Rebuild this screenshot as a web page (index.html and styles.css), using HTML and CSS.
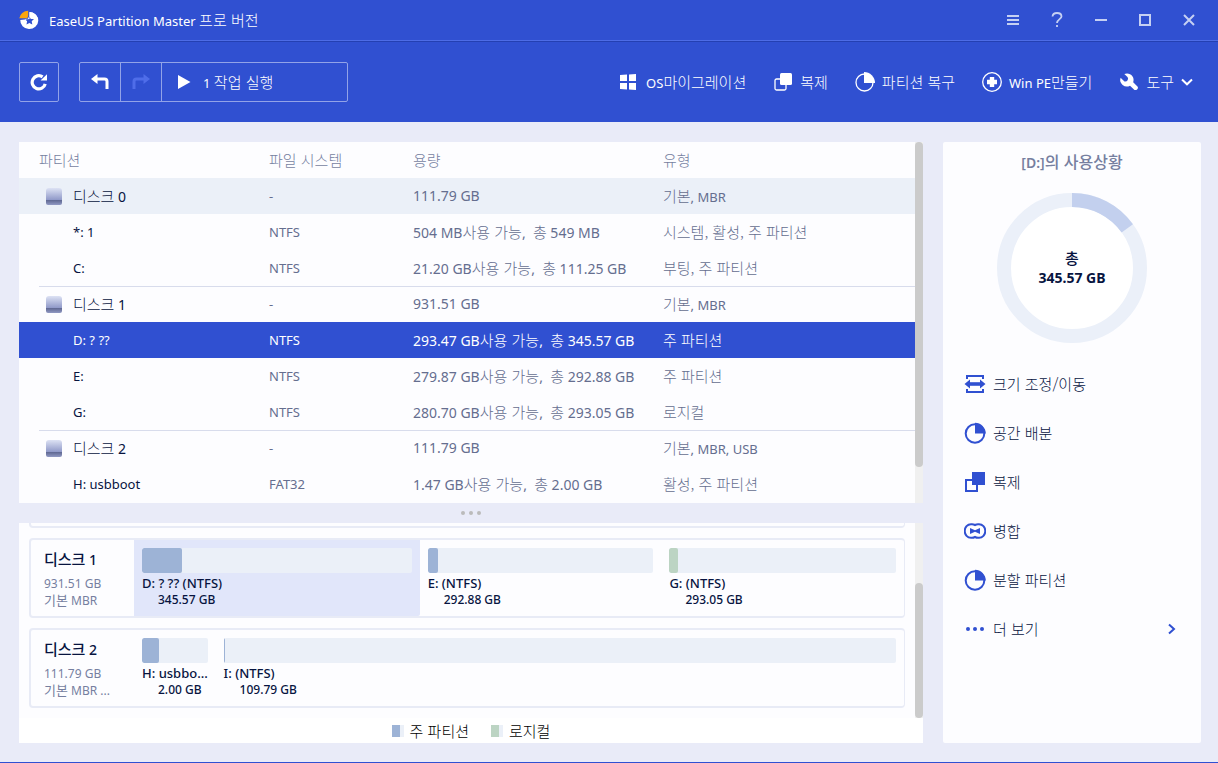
FILE: index.html
```html
<!DOCTYPE html>
<html lang="ko">
<head>
<meta charset="utf-8">
<meta name="viewport" content="width=device-width, initial-scale=1">
<title>EaseUS Partition Master</title>
<link rel="stylesheet" href="styles.css">
</head>
<body>
<div class="app">
  <header class="titlebar">
    <svg class="logo" width="20" height="20" viewBox="0 0 20 20" aria-hidden="true">
      <path fill="#fff" fill-rule="evenodd" d="M10.500 2A9 8.500 0 1 1 1.300 10L10.500 9ZM10.400 5.800L11.800 8.700 15.000 9.100 12.700 11.300 13.300 14.500 10.400 13 7.500 14.500 8.100 11.300 5.800 9.100 9 8.700Z"/>
      <path fill="#fff" d="M10.500 2A9 8.500 0 0 1 19 9L15 9.100 11.800 8.700 10.500 6Z"/>
      <path fill="#fba60c" d="M.3 8.300A9 8.500 0 0 1 9.200.8V6L8.200 8.300Z"/>
    </svg>
    <h1 class="app-name">EaseUS Partition Master <span class="ko">프로 버전</span></h1>
    <div class="window-controls">
      <button type="button" aria-label="Menu"><svg width="12" height="12" viewBox="0 0 12 12"><path d="M0 2H12M0 6H12M0 10H12" stroke="currentColor" stroke-width="2"/></svg></button>
      <button type="button" aria-label="Help"><svg width="12" height="16" viewBox="0 0 12 16"><path d="M1.500 4.500C1.700 2.300 3.500 1 6 1S10.500 2.400 10.500 4.500C10.500 7 6 7.400 6 11M6 13V15" fill="none" stroke="currentColor" stroke-width="1.800"/></svg></button>
      <button type="button" aria-label="Minimize"><svg width="12" height="12" viewBox="0 0 12 12"><path d="M0 6H12" stroke="currentColor" stroke-width="2"/></svg></button>
      <button type="button" aria-label="Maximize"><svg width="12" height="12" viewBox="0 0 12 12"><path d="M1 1H11V11H1Z" fill="none" stroke="currentColor" stroke-width="2"/></svg></button>
      <button type="button" aria-label="Close"><svg width="12" height="12" viewBox="0 0 12 12"><path d="M1 1L11 11M11 1L1 11" stroke="currentColor" stroke-width="2"/></svg></button>
    </div>
  </header>

  <nav class="toolbar">
    <button type="button" class="tool-button" aria-label="Refresh"><svg width="18" height="18" viewBox="0 0 18 18"><path d="M15.200 10.800A6.600 6.600 0 1 1 12.600 3.900" fill="none" stroke="#fff" stroke-width="3.200"/><path d="M11 6.900L17 1.200V7.600H10.600Z" fill="#fff"/></svg></button>
    <div class="button-group">
      <button type="button" class="undo" aria-label="Undo"><svg width="18" height="16" viewBox="0 0 18 16"><path d="M5 5H13.500Q16 5 16 7.500V15" fill="none" stroke="#fff" stroke-width="3"/><path d="M0 5L6.500 0V10Z" fill="#fff"/></svg></button>
      <button type="button" class="redo" aria-label="Redo" disabled><svg width="18" height="16" viewBox="0 0 18 16"><path d="M13 5H4.500Q2 5 2 7.500V15" fill="none" stroke="#4f6de9" stroke-width="3"/><path d="M18 5L11.500 0V10Z" fill="#4f6de9"/></svg></button>
      <button type="button" class="run"><svg width="14" height="16" viewBox="0 0 14 16"><path d="M1 1L13.500 8L1 15Z" fill="#fff"/></svg><span>1 <span class="ko">작업 실행</span></span></button>
    </div>
    <div class="menu">
      <button type="button"><svg width="20" height="20" viewBox="0 0 20 20"><path d="M1 3L8 2.600V9H1ZM10 2.500L17 2V9H10ZM1 11H8V17.400L1 17ZM10 11H17V18L10 17.500Z" fill="#fff"/></svg><span>OS<span class="ko">마이그레이션</span></span></button>
      <button type="button"><svg width="20" height="20" viewBox="0 0 20 20"><rect x="2" y="7" width="11" height="11" rx="1.500" fill="none" stroke="#fff" stroke-width="1.300"/><rect x="7" y="1" width="12" height="12" rx="1.500" fill="#fff"/></svg><span class="ko">복제</span></button>
      <button type="button"><svg width="20" height="20" viewBox="0 0 20 20"><circle cx="9.500" cy="10.500" r="8.500" fill="none" stroke="#fff" stroke-width="1.300"/><path d="M9 0A11 11 0 0 1 20 11H9Z" fill="#fff"/></svg><span class="ko">파티션 복구</span></button>
      <button type="button"><svg width="20" height="20" viewBox="0 0 20 20"><circle cx="10" cy="10" r="9.300" fill="none" stroke="#fff" stroke-width="1.300"/><path d="M10 5V15M5 10H15" stroke="#fff" stroke-width="4.400"/></svg><span>Win PE<span class="ko">만들기</span></span></button>
      <button type="button"><svg width="20" height="20" viewBox="0 0 20 20"><path fill="#fff" d="M8 1.500A6.500 6.500 0 0 1 14.200 10.200L18.700 14.700Q19.500 16 18.300 17.200T15.500 18L11 13.700A6.600 6.600 0 0 1 1.600 5.800L5.500 9.500Q7.500 10 8.600 8.200T8.500 5L5.300 2Q6.500 1.500 8 1.500Z"/></svg><span class="ko">도구</span><svg class="chevron" width="12" height="8" viewBox="0 0 12 8"><path d="M1 1.500L6 6.300L11 1.500" fill="none" stroke="#fff" stroke-width="2"/></svg></button>
    </div>
  </nav>

  <main class="workspace">
    <div class="left">
      <section class="panel list-panel">
        <table class="partitions">
          <colgroup><col class="c-name"><col class="c-fs"><col class="c-size"><col class="c-type"></colgroup>
          <thead>
            <tr><th class="ko">파티션</th><th class="ko">파일 시스템</th><th class="ko">용량</th><th class="ko">유형</th></tr>
          </thead>
          <tbody>
            <tr class="disk hover"><td><div class="disk-name"><i class="drive"></i><span><span class="ko">디스크</span> 0</span></div></td><td>-</td><td>111.79 GB</td><td><span class="ko">기본</span>, MBR</td></tr>
            <tr><td>*: 1</td><td>NTFS</td><td>504 MB<span class="ko">사용 가능</span>,&nbsp; <span class="ko">총</span> 549 MB</td><td><span class="ko">시스템, 활성, 주 파티션</span></td></tr>
            <tr><td>C:</td><td>NTFS</td><td>21.20 GB<span class="ko">사용 가능</span>,&nbsp; <span class="ko">총</span> 111.25 GB</td><td><span class="ko">부팅, 주 파티션</span></td></tr>
            <tr class="disk ruled"><td><div class="disk-name"><i class="drive"></i><span><span class="ko">디스크</span> 1</span></div></td><td>-</td><td>931.51 GB</td><td><span class="ko">기본</span>, MBR</td></tr>
            <tr class="selected"><td>D: ? ??</td><td>NTFS</td><td>293.47 GB<span class="ko">사용 가능</span>,&nbsp; <span class="ko">총</span> 345.57 GB</td><td><span class="ko">주 파티션</span></td></tr>
            <tr><td>E:</td><td>NTFS</td><td>279.87 GB<span class="ko">사용 가능</span>,&nbsp; <span class="ko">총</span> 292.88 GB</td><td><span class="ko">주 파티션</span></td></tr>
            <tr><td>G:</td><td>NTFS</td><td>280.70 GB<span class="ko">사용 가능</span>,&nbsp; <span class="ko">총</span> 293.05 GB</td><td><span class="ko">로지컬</span></td></tr>
            <tr class="disk ruled"><td><div class="disk-name"><i class="drive"></i><span><span class="ko">디스크</span> 2</span></div></td><td>-</td><td>111.79 GB</td><td><span class="ko">기본</span>, MBR, USB</td></tr>
            <tr><td>H: usbboot</td><td>FAT32</td><td>1.47 GB<span class="ko">사용 가능</span>,&nbsp; <span class="ko">총</span> 2.00 GB</td><td><span class="ko">활성, 주 파티션</span></td></tr>
          </tbody>
        </table>
        <div class="scrollbar"><div class="thumb" style="height:90%"></div></div>
      </section>

      <div class="splitter"><i></i><i></i><i></i></div>

      <section class="panel map-panel">
        <div class="map-body">
          <div class="cards">
            <div class="card card-cut"></div>
            <article class="card">
              <div class="card-info"><h2><span class="ko">디스크</span> 1</h2><p>931.51 GB</p><p><span class="ko-s">기본</span> MBR</p></div>
              <div class="segments">
                <div class="segment active" style="width:37.1%"><div class="bar"><div class="fill" style="width:15%"></div></div><p class="seg-name">D: ? ?? (NTFS)</p><p class="seg-size">345.57 GB</p></div>
                <div class="segment" style="width:31.4%"><div class="bar"><div class="fill" style="width:4.4%"></div></div><p class="seg-name">E: (NTFS)</p><p class="seg-size">292.88 GB</p></div>
                <div class="segment" style="width:31.5%"><div class="bar"><div class="fill logical" style="width:4%"></div></div><p class="seg-name">G: (NTFS)</p><p class="seg-size">293.05 GB</p></div>
              </div>
            </article>
            <article class="card">
              <div class="card-info"><h2><span class="ko">디스크</span> 2</h2><p>111.79 GB</p><p><span class="ko-s">기본</span> MBR ...</p></div>
              <div class="segments">
                <div class="segment" style="width:10.6%"><div class="bar"><div class="fill" style="width:26%"></div></div><p class="seg-name">H: usbbo...</p><p class="seg-size">2.00 GB</p></div>
                <div class="segment" style="width:89.4%"><div class="bar"><div class="fill" style="width:0.15%"></div></div><p class="seg-name">I: (NTFS)</p><p class="seg-size">109.79 GB</p></div>
              </div>
            </article>
          </div>
          <div class="scrollbar end"><div class="thumb" style="height:69%"></div></div>
        </div>
        <div class="legend">
          <span class="key"><i class="swatch"></i><span class="ko">주 파티션</span></span>
          <span class="key"><i class="swatch logical"></i><span class="ko">로지컬</span></span>
        </div>
      </section>
    </div>

    <aside class="panel side">
      <h2 class="side-title">[D:]<span class="ko">의 사용상황</span></h2>
      <div class="donut">
        <svg viewBox="0 0 150 150" width="150" height="150" aria-hidden="true">
          <circle cx="75" cy="75" r="68" fill="#fff" stroke="#ebf0f9" stroke-width="14"/>
          <circle cx="75" cy="75" r="68" fill="none" stroke="#c3d0ee" stroke-width="14" pathLength="100" stroke-dasharray="15.100 84.900" transform="rotate(-90 75 75)"/>
        </svg>
        <div class="donut-label"><span class="ko">총</span><span>345.57 GB</span></div>
      </div>
      <div class="actions">
        <button type="button"><svg width="22" height="22" viewBox="0 0 22 22"><path d="M3 6V3H19V6M3 16V19H19V16" fill="none" stroke="#3050d1" stroke-width="2"/><path d="M5 11H17" stroke="#3050d1" stroke-width="3.600"/><path d="M.5 11L6 6.500V15.500ZM21.500 11L16 6.500V15.500Z" fill="#3050d1"/></svg><span class="ko">크기 조정/이동</span></button>
        <button type="button"><svg width="22" height="22" viewBox="0 0 22 22"><circle cx="11" cy="11.500" r="9.300" fill="none" stroke="#3050d1" stroke-width="2"/><path d="M11 .8A10.800 10.800 0 0 1 21.800 11.500H11Z" fill="#3050d1"/></svg><span class="ko">공간 배분</span></button>
        <button type="button"><svg width="22" height="22" viewBox="0 0 22 22"><path d="M2 9H13V20H2Z" fill="none" stroke="#3050d1" stroke-width="2"/><path d="M8 1H21V14H8Z" fill="#3050d1"/></svg><span class="ko">복제</span></button>
        <button type="button"><svg width="22" height="22" viewBox="0 0 22 22"><path d="M8 4.200H7A6.300 6.800 0 0 0 7 17.800H8Q9.500 17.800 11 17Q12.500 17.800 14 17.800H15A6.300 6.800 0 0 0 15 4.200H14Q12.500 4.200 11 5Q9.500 4.200 8 4.200Z" fill="none" stroke="#3050d1" stroke-width="2"/><path d="M6 8L11 10.200L16 8V14L11 11.800L6 14Z" fill="#3050d1"/></svg><span class="ko">병합</span></button>
        <button type="button"><svg width="22" height="22" viewBox="0 0 22 22"><circle cx="11" cy="11.500" r="9.300" fill="none" stroke="#3050d1" stroke-width="2"/><path d="M11 .8A10.800 10.800 0 0 1 21.800 11.500H11Z" fill="#3050d1"/></svg><span class="ko">분할 파티션</span></button>
        <button type="button"><svg width="22" height="22" viewBox="0 0 22 22" fill="#3050d1"><circle cx="4" cy="11" r="2"/><circle cx="11" cy="11" r="2"/><circle cx="18" cy="11" r="2"/></svg><span class="ko">더 보기</span><svg class="more" width="8" height="12" viewBox="0 0 8 12"><path d="M1 1.500L6 6L1 10.500" fill="none" stroke="#3050d1" stroke-width="2"/></svg></button>
      </div>
    </aside>
  </main>
</div>
</body>
</html>
```

FILE: styles.css
```css
* { box-sizing: border-box; }

body {
  margin: 0;
  font-family: "Noto Sans", "Noto Sans CJK KR", sans-serif;
  font-size: 13px;
  line-height: 20px;
  color: #07143f;
  background: #e9ebf8;
}

h1, h2, p { margin: 0; font-weight: 400; }
svg { display: block; flex: none; }

button {
  display: flex;
  align-items: center;
  padding: 0;
  border: 0;
  background: none;
  color: inherit;
  font: inherit;
  white-space: nowrap;
}

/* Hangul is drawn a little larger than the Latin text beside it */
.ko {
  font-family: "Noto Sans CJK KR", sans-serif;
  font-size: 15px;
  font-weight: 300;
  line-height: 20px;
}
.ko-s { font-size: 13px; }

.app {
  display: flex;
  flex-direction: column;
  min-height: 100vh;
  border-bottom: 1px solid #3050d1;
}

/* Title bar */
.titlebar {
  display: flex;
  align-items: center;
  height: 41px;
  padding: 0 7px 0 19px;
  background: #3050d1;
  border-bottom: 1px solid #4d6ce6;
  color: #fff;
}
.app-name {
  flex: 1;
  margin-left: 10px;
  font-size: 13px;
}
.window-controls { display: flex; color: #c5d0f3; }
.window-controls button {
  justify-content: center;
  width: 44px;
  height: 40px;
}

/* Toolbar */
.toolbar {
  display: flex;
  align-items: center;
  height: 81px;
  padding: 0 25px 0 19px;
  background: #3050d1;
  border-top: 1px solid #2440b2;
  color: #fff;
}
.tool-button, .button-group {
  height: 40px;
  border: 1px solid #92a3e8;
  border-radius: 2px;
}
.tool-button { justify-content: center; width: 40px; }
.button-group { display: flex; margin-left: 20px; }
.button-group button { justify-content: center; }
.button-group button + button { border-left: 1px solid #92a3e8; }
.button-group .undo { width: 40px; }
.button-group .redo { width: 41px; }
.button-group .run {
  justify-content: flex-start;
  gap: 12px;
  width: 186px;
  padding-left: 15px;
}
.menu { display: flex; gap: 27px; margin-left: auto; }
.menu button { gap: 7px; }

/* Workspace */
.workspace {
  flex: 1;
  display: flex;
  gap: 20px;
  padding: 20px 17px 19px 19px;
}
.left {
  flex: 1;
  min-width: 0;
  display: flex;
  flex-direction: column;
}
.panel { background: #fdfdff; }

.scrollbar {
  flex: none;
  display: flex;
  flex-direction: column;
  width: 8px;
  background: #f0f0f0;
}
.scrollbar.end { justify-content: flex-end; }
.thumb { background: #cbcbcb; border-radius: 4px; }

/* Partition table */
.list-panel { display: flex; min-height: 361px; }
.partitions {
  flex: 1;
  align-self: flex-start;
  border-collapse: collapse;
  table-layout: fixed;
  color: #656e8f;
}
.c-name { width: 250px; }
.c-fs { width: 144px; }
.c-size { width: 250px; }
.partitions th, .partitions td {
  height: 36px;
  padding: 0;
  text-align: left;
  white-space: nowrap;
}
.partitions th { color: #767f9f; }
.partitions th:first-child { padding-left: 20px; }
.partitions td:first-child { padding-left: 54px; color: #07143f; }
.partitions td:nth-child(3) { font-size: 14px; }
.partitions .disk td:first-child { padding-left: 27px; }
.partitions .hover { background: #ebf0f8; }
.partitions .ruled td {
  background: linear-gradient(#d8dcec, #d8dcec) 0 0 / 100% 1px no-repeat;
}
.partitions .ruled td:first-child { background-position-x: 20px; background-size: 230px 1px; }
.partitions .selected { background: #3050d1; }
.partitions .selected td, .partitions .selected td:first-child { color: #fff; }
.disk-name {
  display: flex;
  align-items: center;
  gap: 11px;
  font-size: 14px;
}
.drive {
  width: 16px;
  height: 17px;
  border-radius: 3px 3px 2px 2px;
  background: linear-gradient(#dde2f4 0, #8f98c8 12px, #5d6690 12px, #9199c4 17px);
}

.splitter {
  display: flex;
  justify-content: center;
  align-items: center;
  gap: 4px;
  height: 20px;
}
.splitter i {
  width: 4px;
  height: 4px;
  border-radius: 50%;
  background: #bbb;
}

/* Disk map */
.map-panel { flex: 1; display: flex; flex-direction: column; }
.map-body { flex: 1; display: flex; }
.cards {
  flex: 1;
  min-width: 0;
  display: flex;
  flex-direction: column;
  gap: 10px;
  padding: 0 10px 10px;
}
.card {
  display: flex;
  height: 80px;
  border: 2px solid #e8ebf6;
  border-right-width: 1px;
  border-radius: 4px;
}
.card-cut { height: 5px; border-top: 0; border-radius: 0 0 4px 4px; }
.card-info { flex: none; width: 103px; padding: 9px 0 0 13px; }
.card-info h2 { font-size: 14px; font-weight: 500; }
.card-info .ko { font-weight: 500; }
.card-info p { font-size: 12px; line-height: 16px; color: #767f9f; }
.card-info h2 + p { margin-top: 6px; }
.segments { flex: 1; min-width: 0; display: flex; }
.segment { min-width: 0; padding: 8px 8px 0; }
.segment.active { background: #e1e6fa; border-radius: 0 0 2px 0; }
.bar {
  height: 25px;
  border-radius: 2px;
  overflow: hidden;
  background: #ebf0f8;
}
.fill { height: 100%; min-width: 1px; border-radius: 2px; background: #9db3d6; }
.fill.logical { background: #bcd4c3; }
.seg-name, .seg-size { font-weight: 500; white-space: nowrap; }
.seg-name { font-size: 13px; line-height: 20px; }
.seg-size { padding-left: 16px; font-size: 12px; line-height: 14px; }

.legend {
  display: flex;
  justify-content: center;
  gap: 22px;
  height: 25px;
  background: #fff;
  color: #000;
}
.key { display: flex; align-items: center; gap: 6px; }
.swatch {
  width: 12px;
  height: 12px;
  background: #9db3d6;
  border-right: 4px solid #ebf0f8;
}
.swatch.logical { background: #bcd4c3; border-right-color: #ebf0f8; }

/* Usage and actions */
.side { flex: none; width: 258px; padding-top: 9px; border-radius: 2px; }
.side-title {
  text-align: center;
  font-size: 14px;
  font-weight: 600;
  line-height: 20px;
  color: #767f9f;
}
.side-title .ko { font-size: 16px; font-weight: 500; }
.donut {
  display: grid;
  place-items: center;
  margin-top: 20px;
}
.donut > * { grid-area: 1 / 1; }
.donut-label {
  display: flex;
  flex-direction: column;
  align-items: center;
  font-size: 14px;
  font-weight: 700;
}
.donut-label .ko { font-weight: 500; }
.actions { margin-top: 16px; }
.actions button {
  width: 100%;
  height: 49px;
  padding: 0 25px 0 21px;
  gap: 7px;
}
.more { margin-left: auto; }
```
